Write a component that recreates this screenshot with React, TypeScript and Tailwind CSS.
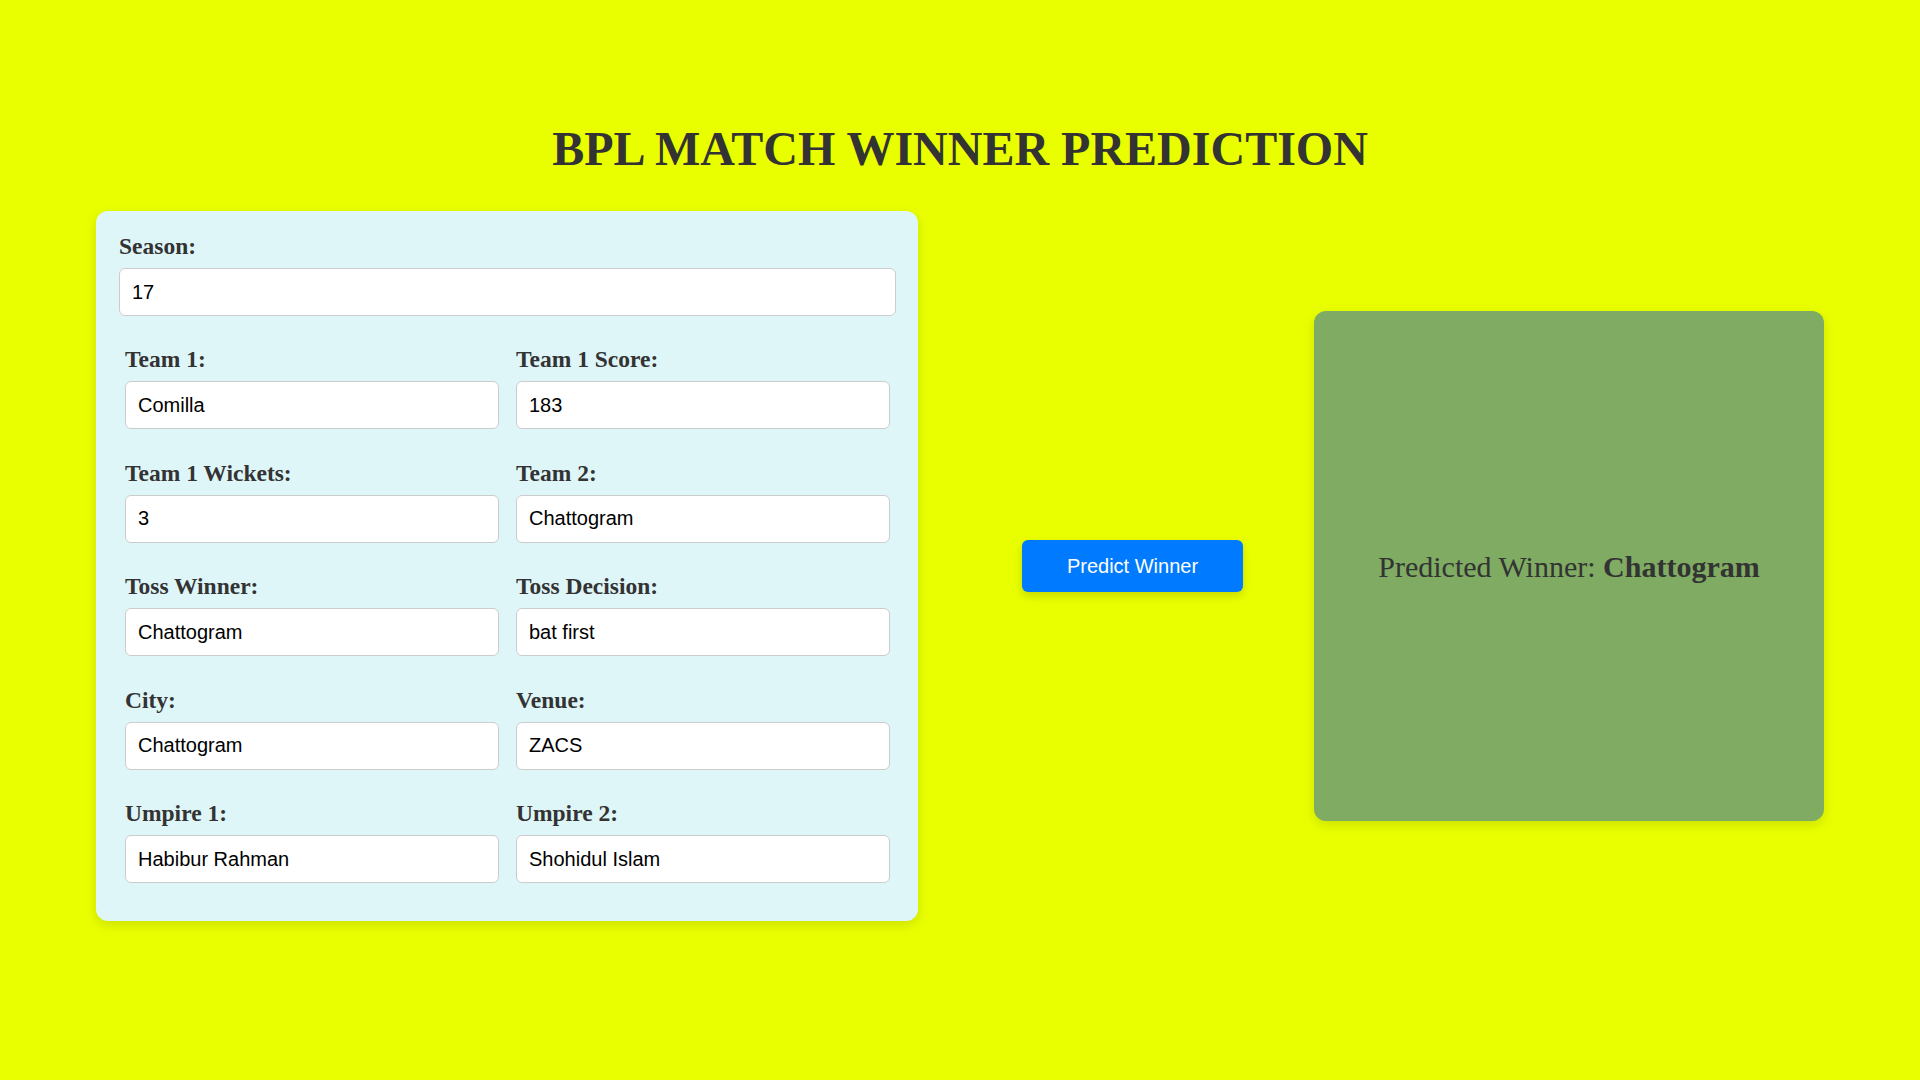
const fields: [string, string][] = [
  ['Team 1:', 'Comilla'],
  ['Team 1 Score:', '183'],
  ['Team 1 Wickets:', '3'],
  ['Team 2:', 'Chattogram'],
  ['Toss Winner:', 'Chattogram'],
  ['Toss Decision:', 'bat first'],
  ['City:', 'Chattogram'],
  ['Venue:', 'ZACS'],
  ['Umpire 1:', 'Habibur Rahman'],
  ['Umpire 2:', 'Shohidul Islam'],
]

function Field({ label, value }: { label: string; value: string }) {
  return (
    <div className="flex flex-col">
      <label className="text-[23.5px] font-bold leading-[27px] text-[#333] mb-[8px]">{label}</label>
      <input
        defaultValue={value}
        className="h-[48px] w-full rounded-[6px] border border-[#cccccc] bg-white px-[12px] text-[20px] text-black outline-none [font-family:'Liberation_Sans',Arial,sans-serif]"
      />
    </div>
  )
}

export default function App() {
  return (
    <div className="min-h-screen w-full bg-[#e9ff00] pt-[121px] [font-family:'Liberation_Serif','Times_New_Roman',serif]">
      <h1 className="text-center text-[48px] font-bold leading-[55px] text-[#333] mb-[35px]">
        BPL MATCH WINNER PREDICTION
      </h1>

      <div className="flex items-center px-[96px]">
        {/* Form */}
        <div className="w-[822px] shrink-0 rounded-[12px] bg-[#dff6f9] p-[22px] pl-[23px] pb-[38px] shadow-[0_4px_12px_rgba(0,0,0,0.12)]">
          <div className="mb-[30px]">
            <Field label="Season:" value="17" />
          </div>
          <div className="grid grid-cols-2 gap-x-[17px] gap-y-[30.6px] px-[6px]">
            {fields.map(([l, v]) => (
              <Field key={l} label={l} value={v} />
            ))}
          </div>
        </div>

        <button className="ml-[104px] h-[52px] w-[221px] shrink-0 rounded-[6px] bg-[#007bff] text-[20px] text-white shadow-[0_4px_10px_rgba(0,0,0,0.15)] [font-family:'Liberation_Sans',Arial,sans-serif]">
          Predict Winner
        </button>

        {/* Result */}
        <div className="ml-[71px] flex h-[510px] w-[510px] shrink-0 items-center justify-center rounded-[12px] bg-[#7fab62] shadow-[0_4px_12px_rgba(0,0,0,0.12)]">
          <p className="text-[30px] text-[#333]">
            Predicted Winner: <span className="font-bold">Chattogram</span>
          </p>
        </div>
      </div>
    </div>
  )
}
